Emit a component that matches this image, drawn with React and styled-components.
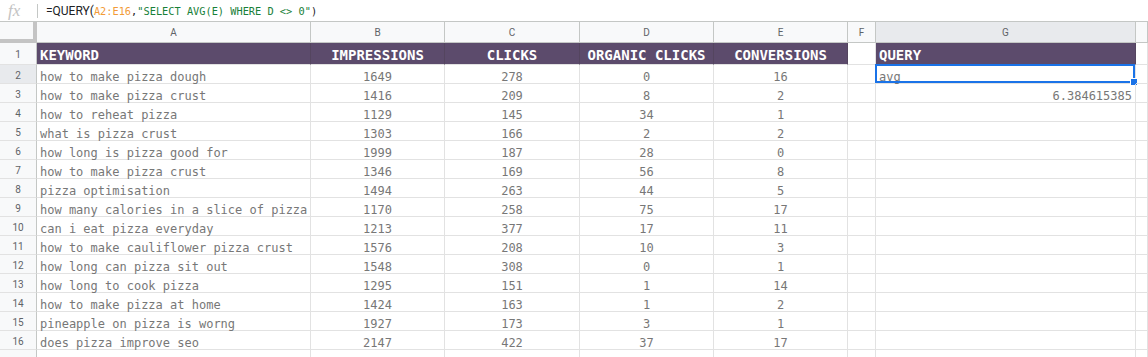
import styled, { createGlobalStyle, css } from "styled-components"

const GlobalStyle = createGlobalStyle`
body {
    margin: 0;
    background: #fff;
    font-family: "Roboto", "Liberation Sans", sans-serif;
}
`

const COLS = ["A", "B", "C", "D", "E", "F", "G", "H"]
const HEADERS = ["KEYWORD", "IMPRESSIONS", "CLICKS", "ORGANIC CLICKS", "CONVERSIONS"]

const ROWS = [
    ["how to make pizza dough", 1649, 278, 0, 16],
    ["how to make pizza crust", 1416, 209, 8, 2],
    ["how to reheat pizza", 1129, 145, 34, 1],
    ["what is pizza crust", 1303, 166, 2, 2],
    ["how long is pizza good for", 1999, 187, 28, 0],
    ["how to make pizza crust", 1346, 169, 56, 8],
    ["pizza optimisation", 1494, 263, 44, 5],
    ["how many calories in a slice of pizza", 1170, 258, 75, 17],
    ["can i eat pizza everyday", 1213, 377, 17, 11],
    ["how to make cauliflower pizza crust", 1576, 208, 10, 3],
    ["how long can pizza sit out", 1548, 308, 0, 1],
    ["how long to cook pizza", 1295, 151, 1, 14],
    ["how to make pizza at home", 1424, 163, 1, 2],
    ["pineapple on pizza is worng", 1927, 173, 3, 1],
    ["does pizza improve seo", 2147, 422, 37, 17],
]

export default function App() {
    return (
        <>
            <GlobalStyle />
            <FormulaBar>
                <FxIcon>fx</FxIcon>
                <Divider />
                <Formula>
                    <FnName>=QUERY(</FnName>
                    <Arg $color="#f29b38">A2:E16</Arg>
                    <Arg>,</Arg>
                    <Arg $color="#188038">"SELECT AVG(E) WHERE D &lt;&gt; 0"</Arg>
                    <Arg>)</Arg>
                </Formula>
            </FormulaBar>
            <Sheet>
                <Corner />
                {COLS.map(c => (
                    <ColHeader key={c} $selected={c === "G"}>{c === "H" ? "" : c}</ColHeader>
                ))}

                <RowHeader>1</RowHeader>
                {HEADERS.map((h, i) => (
                    <Cell key={h} $head $align={i === 0 ? "left" : "center"}>{h}</Cell>
                ))}
                <Cell />
                <Cell $head>QUERY</Cell>
                <Cell />

                {ROWS.map((row, r) => {
                    const n = r + 2
                    return [
                        <RowHeader key={`h${n}`} $selected={n === 2}>{n}</RowHeader>,
                        ...row.map((v, i) => (
                            <Cell key={`${n}-${i}`} $align={i === 0 ? "left" : "center"}>{v}</Cell>
                        )),
                        <Cell key={`${n}-f`} />,
                        n === 2 ? (
                            <Cell key={`${n}-g`}>
                                avg
                                <Selection><Handle /></Selection>
                            </Cell>
                        ) : (
                            <Cell key={`${n}-g`} $align="right">{n === 3 ? "6.384615385" : ""}</Cell>
                        ),
                        <Cell key={`${n}-h`} />,
                    ]
                })}

                <RowHeader />
                {COLS.map(c => <Cell key={`17${c}`} />)}
            </Sheet>
        </>
    )
}

const FormulaBar = styled.div`
display: flex;
align-items: center;
height: 22px;
box-sizing: border-box;
border-bottom: 1px solid #c4c7c5;
`

const FxIcon = styled.span`
width: 37px;
padding-left: 8px;
box-sizing: border-box;
font-family: "Liberation Serif", serif;
font-style: italic;
font-size: 17px;
color: #c3c3c3;
line-height: 22px;
`

const Divider = styled.div`
width: 1px;
height: 14px;
background: #c4c7c5;
margin-right: 8px;
`

const Formula = styled.div`
display: flex;
align-items: baseline;
white-space: pre;
color: #202124;
`

const FnName = styled.span`
font-family: "Roboto", sans-serif;
font-size: 12px;
`

const Arg = styled.span`
font-family: "DejaVu Sans Mono", monospace;
font-size: 10.3px;
color: ${p => p.$color || "#202124"};
`

const Sheet = styled.div`
display: grid;
grid-template-columns: 37px 274px 134px 135px 134px 134px 28px 260px 1fr;
grid-template-rows: 21px 22px;
grid-auto-rows: 19px;
overflow: hidden;
height: 335px;
`

const Corner = styled.div`
background: #f8f9fa;
box-sizing: border-box;
border-right: 4px solid #c4c4c4;
border-bottom: 4px solid #c4c4c4;
`

const headerBase = css`
display: flex;
align-items: center;
justify-content: center;
box-sizing: border-box;
font-family: "Roboto", "Liberation Sans", sans-serif;
font-size: 10px;
color: #5f6368;
`

const ColHeader = styled.div`
${headerBase}
background: ${p => (p.$selected ? "#e8eaed" : "#f8f9fa")};
border-right: 1px solid #c4c7c5;
border-bottom: 1px solid #c4c7c5;
`

const RowHeader = styled.div`
${headerBase}
padding-top: 2px;
background: ${p => (p.$selected ? "#e8eaed" : "#f8f9fa")};
border-right: 1px solid #c4c7c5;
border-bottom: 1px solid #e2e2e2;
`

const Cell = styled.div`
position: relative;
display: flex;
align-items: flex-end;
justify-content: ${p => ({ left: "flex-start", center: "center", right: "flex-end" }[p.$align || "left"])};
padding: 0 3px ${p => (p.$head ? "2px" : "0")};
box-sizing: border-box;
border-right: 1px solid ${p => (p.$head ? "#54455f" : "#e2e2e2")};
border-bottom: 1px solid #e2e2e2;
white-space: nowrap;
line-height: ${p => (p.$head ? "14px" : "12px")};
font-family: "DejaVu Sans Mono", monospace;
font-size: ${p => (p.$head ? "14px" : "12px")};
font-weight: ${p => (p.$head ? 700 : 400)};
color: ${p => (p.$head ? "#ffffff" : "#777777")};
background: ${p => (p.$head ? "#5c4b6c" : "transparent")};
`

const Selection = styled.div`
position: absolute;
left: -1px;
top: -1px;
right: 0;
bottom: 0;
border: 2px solid #1a73e8;
pointer-events: none;
`

const Handle = styled.div`
position: absolute;
right: -5px;
bottom: -5px;
width: 6px;
height: 6px;
background: #1a73e8;
border: 1px solid #fff;
`
